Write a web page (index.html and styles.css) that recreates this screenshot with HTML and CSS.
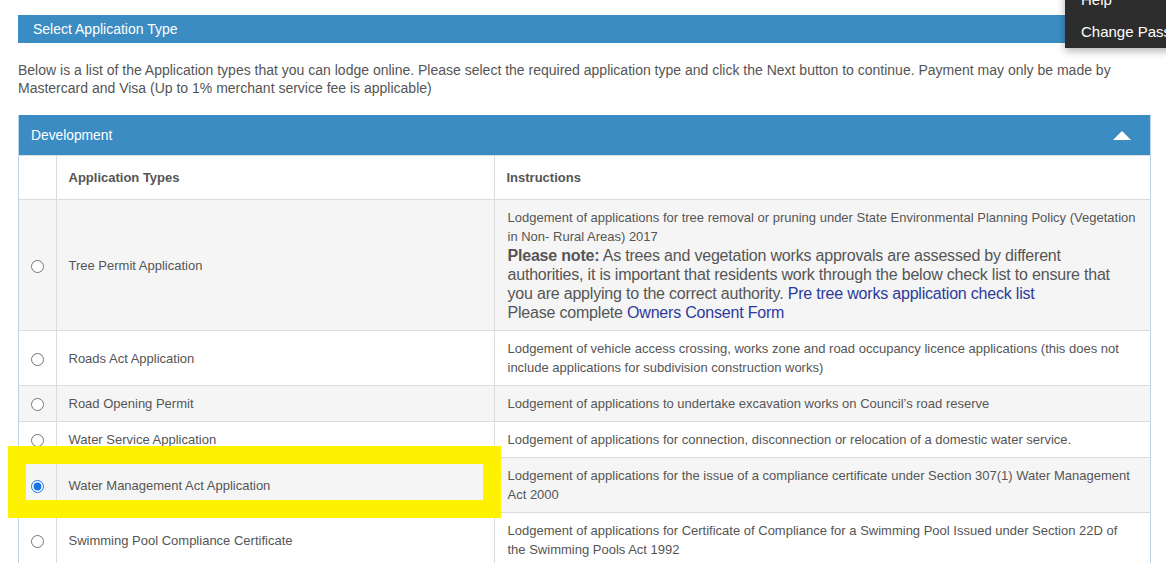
FILE: index.html
```html
<!DOCTYPE html>
<html lang="en">
  <head>
    <meta charset="UTF-8" />
    <title>Select Application Type</title>
    <link rel="stylesheet" href="styles.css">
  </head>
  <body>
    <div class="user-menu">
      <a href="#">Help</a>
      <a href="#">Change Password</a>
    </div>

    <main class="page">
      <div class="title-bar">Select Application Type</div>
      <p class="intro">Below is a list of the Application types that you can lodge online. Please select the required application type and click the Next button to continue. Payment may only be made by Mastercard and Visa (Up to 1% merchant service fee is applicable)</p>

      <section class="panel">
        <div class="panel-head">
          <span>Development</span>
          <span class="caret"></span>
        </div>
        <table class="app-table">
          <colgroup><col class="c-radio"><col class="c-type"><col></colgroup>
          <thead>
            <tr><th></th><th>Application Types</th><th>Instructions</th></tr>
          </thead>
          <tbody>
            <tr>
              <td class="rad"><input type="radio" name="apptype"></td>
              <td>Tree Permit Application</td>
              <td>Lodgement of applications for tree removal or pruning under State Environmental Planning Policy (Vegetation in Non- Rural Areas) 2017
                <div class="note"><b>Please note:</b> As trees and vegetation works approvals are assessed by different authorities, it is important that residents work through the below check list to ensure that you are applying to the correct authority. <a href="#">Pre tree works application check list</a><br>Please complete <a href="#">Owners Consent Form</a></div>
              </td>
            </tr>
            <tr>
              <td class="rad"><input type="radio" name="apptype"></td>
              <td>Roads Act Application</td>
              <td>Lodgement of vehicle access crossing, works zone and road occupancy licence applications (this does not include applications for subdivision construction works)</td>
            </tr>
            <tr>
              <td class="rad"><input type="radio" name="apptype"></td>
              <td>Road Opening Permit</td>
              <td>Lodgement of applications to undertake excavation works on Council’s road reserve</td>
            </tr>
            <tr>
              <td class="rad"><input type="radio" name="apptype"></td>
              <td>Water Service Application</td>
              <td>Lodgement of applications for connection, disconnection or relocation of a domestic water service.</td>
            </tr>
            <tr>
              <td class="rad"><input type="radio" name="apptype" checked></td>
              <td>Water Management Act Application</td>
              <td>Lodgement of applications for the issue of a compliance certificate under Section 307(1) Water Management Act 2000</td>
            </tr>
            <tr>
              <td class="rad"><input type="radio" name="apptype"></td>
              <td>Swimming Pool Compliance Certificate</td>
              <td>Lodgement of applications for Certificate of Compliance for a Swimming Pool Issued under Section 22D of the Swimming Pools Act 1992</td>
            </tr>
          </tbody>
        </table>
      </section>
    </main>

    <!-- highlight box drawn over the selected row -->
    <div class="highlight"></div>
  </body>
</html>
```
FILE: styles.css
```css
:root{--blue:#3a8cc2;--text:#555;--border:#dcdcdc;--stripe:#f5f5f5;--link:#2d3a9c}
*{box-sizing:border-box}
body{margin:0;font-family:"Liberation Sans",Arial,sans-serif;color:var(--text);background:#fff;overflow:hidden}
.page{width:1133px;margin-left:18px;padding-top:15px}
.title-bar{background:var(--blue);color:#fff;font-size:14px;height:28px;line-height:28px;padding-left:15px}
.intro{font-size:14px;line-height:18px;margin:18px 0}
.panel{border:1px solid #b9d5ea;border-top:0}
.panel-head{background:var(--blue);color:#fff;font-size:13.8px;height:40px;display:flex;align-items:center;justify-content:space-between;padding:0 19px 0 12px}
.caret{width:0;height:0;border-left:9px solid transparent;border-right:9px solid transparent;border-bottom:9px solid #fff;margin-top:1px}
.app-table{width:100%;border-collapse:collapse;font-size:13px;table-layout:fixed}
.c-radio{width:37px}
.c-type{width:438px}
.app-table th,.app-table td{border:1px solid var(--border);padding:8px 12px;line-height:19px;text-align:left;vertical-align:middle}
.app-table tr>:first-child{border-left:0}
.app-table tr>:last-child{border-right:0}
.app-table th{font-weight:700;padding:12px;height:44px}
.app-table tbody tr:nth-child(odd){background:var(--stripe)}
.app-table td:last-child{padding-left:13px}
.app-table td.rad{padding:0;text-align:center}
.rad input{margin:0;width:13px;height:13px;vertical-align:middle;accent-color:#1a73e8}
.note{font-size:16px;letter-spacing:-.2px}
.note b{color:#555}
.note a,.app-table a{color:var(--link);text-decoration:none}
.user-menu{position:absolute;top:-16px;left:1065px;width:160px;background:#2d2d2d;padding:0 16px;box-shadow:0 3px 8px rgba(0,0,0,.3);z-index:5}
.user-menu a{display:block;color:#fff;text-decoration:none;font-size:15px;line-height:32px;white-space:nowrap}
.highlight{position:absolute;left:8px;top:446px;width:493px;height:72px;border:18px solid #fff200;pointer-events:none}
```
